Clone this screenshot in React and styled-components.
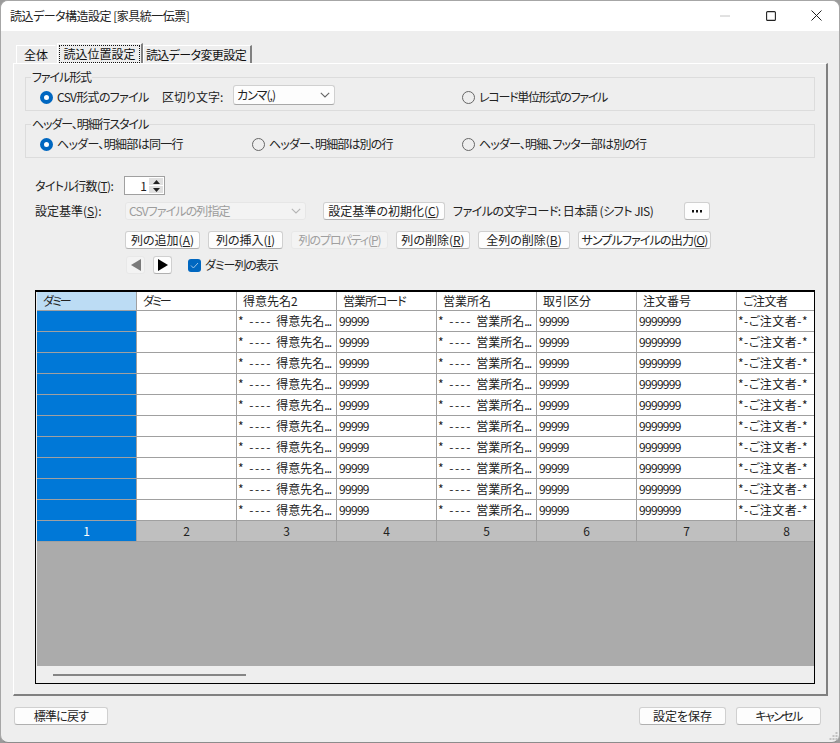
import React from 'react'
import styled, { createGlobalStyle } from 'styled-components'

const GlobalStyle = createGlobalStyle`
  html, body {
    margin: 0;
    padding: 0;
    background: #9a9a9a;
  }
  * {
    box-sizing: border-box;
  }
`

const Window = styled.div`
  position: relative;
  display: flex;
  flex-direction: column;
  width: 840px;
  height: 743px;
  overflow: hidden;
  background: #eeeeee;
  border: 1px solid #a6a6a6;
  border-bottom-color: #8c8c8c;
  border-radius: 8px;
  color: #111;
  font-family: "Noto Sans CJK JP", "Liberation Sans", sans-serif;
  font-size: 12px;
  line-height: 14px;
  font-feature-settings: "palt";
`

const TitleBar = styled.div`
  display: flex;
  align-items: center;
  flex: none;
  height: 30px;
  padding-left: 9px;
  background: #fff;
`

const TitleText = styled.div`
  flex: 1;
  color: #222;
  letter-spacing: -0.5px;
`

const WinButton = styled.div`
  display: flex;
  align-items: center;
  justify-content: center;
  width: 45.5px;
  height: 30px;
  margin-top: -1px;
`

const Content = styled.div`
  display: flex;
  flex-direction: column;
  flex: 1;
  padding: 12px 11px 0 12px;
`

const TabRow = styled.div`
  display: flex;
  align-items: flex-end;
  height: 20px;
  padding-left: 3px;
`

const Tab = styled.div`
  display: flex;
  align-items: center;
  justify-content: center;
  height: ${p => (p.$active ? 20 : 18)}px;
  width: ${p => p.$w}px;
  margin-right: ${p => p.$gap || 0}px;
  padding-right: ${p => p.$pr || 0}px;
  letter-spacing: ${p => p.$ls || 0}px;
  border-top: 1px solid #fff;
  border-left: 1px solid #fff;
  border-right: ${p => (p.$edge ? '2px solid #808080' : '1px solid transparent')};
`

const FocusText = styled.span`
  padding: 1px 3px;
  outline: 1px dotted #111;
`

const Panel = styled.div`
  display: flex;
  flex-direction: column;
  width: 815px;
  height: 633px;
  padding: 6px 11px 0 11px;
  border-top: 1px solid #fff;
  border-left: 1px solid #fff;
  border-right: 2px solid #808080;
  border-bottom: 2px solid #808080;
`

const Group = styled.fieldset`
  margin: 0 0 6px 0;
  padding: 0 0 0 14px;
  min-width: 0;
  width: 790px;
  border: 1px solid #dcdcdc;
`

const Legend = styled.legend`
  margin-left: -9px;
  padding: 0 1px;
  color: #222;
  height: 14px;
  letter-spacing: -1.1px;
`

const GroupRow = styled.div`
  display: grid;
  grid-template-columns: 212px 210px 1fr;
  align-items: center;
  height: 26px;
`

const Span2 = styled.div`
  display: flex;
  align-items: center;
  grid-column: span 2;
`

const RadioWrap = styled.label`
  display: flex;
  align-items: center;
  flex: none;
  gap: 4px;
  width: ${p => (p.$w ? `${p.$w}px` : 'auto')};
  color: #222;
  letter-spacing: ${p => p.$ls ?? -0.7}px;
`

const RadioDot = styled.span`
  flex: none;
  width: 13px;
  height: 13px;
  border-radius: 50%;
  background: ${p => (p.$on ? '#fff' : 'transparent')};
  border: ${p => (p.$on ? '4px solid #0067c0' : '1px solid #666')};
`

const Caption = styled.span`
  flex: none;
  margin-left: ${p => p.$ml || 0}px;
  width: ${p => (p.$w ? `${p.$w}px` : 'auto')};
  color: #222;
  letter-spacing: ${p => p.$ls || 0}px;
`

const Combo = styled.div`
  display: flex;
  align-items: center;
  justify-content: space-between;
  flex: none;
  width: ${p => p.$w}px;
  height: ${p => p.$h || 20}px;
  margin-bottom: ${p => p.$mb || 0}px;
  padding: 0 4px 0 3px;
  background: ${p => (p.$disabled ? '#f3f3f3' : '#fdfdfd')};
  color: ${p => (p.$disabled ? '#9c9c9c' : '#222')};
  border: 1px solid ${p => (p.$disabled ? '#e6e6e6' : '#d0d0d0')};
  border-bottom-color: ${p => (p.$disabled ? '#e6e6e6' : '#a8a8a8')};
  border-radius: 3px;
  letter-spacing: ${p => p.$ls || 0}px;
`

const FormRow = styled.div`
  display: flex;
  align-items: center;
  height: ${p => p.$h || 18}px;
  margin-top: ${p => p.$mt || 0}px;
  padding-left: ${p => p.$pl || 0}px;
  gap: ${p => p.$gap || 0}px;
`

const Spinner = styled.div`
  display: flex;
  align-items: center;
  justify-content: flex-end;
  width: 41px;
  height: 19px;
  margin-left: -1px;
  padding-right: 1px;
  background: #fff;
  border: 1px solid #a0a0a0;
`

const SpinValue = styled.span`
  margin-right: 2px;
  color: #222;
`

const SpinArrows = styled.div`
  display: flex;
  flex-direction: column;
  gap: 1px;
  width: 14px;
`

const SpinArrow = styled.div`
  display: flex;
  align-items: center;
  justify-content: center;
  height: 7px;
  background: #e0e0e0;
`

const Button = styled.div`
  display: flex;
  align-items: center;
  justify-content: center;
  flex: none;
  width: ${p => p.$w}px;
  height: 18px;
  margin-left: ${p => p.$ml || 0}px;
  background: ${p => (p.$disabled ? '#f3f3f3' : '#fdfdfd')};
  color: ${p => (p.$disabled ? '#a0a0a0' : '#222')};
  border: 1px solid ${p => (p.$disabled ? '#e8e8e8' : '#d0d0d0')};
  border-bottom-color: ${p => (p.$disabled ? '#e8e8e8' : '#b0b0b0')};
  border-radius: 3px;
  white-space: nowrap;
  letter-spacing: ${p => p.$ls || 0}px;
`

const Check = styled.span`
  display: flex;
  align-items: center;
  justify-content: center;
  flex: none;
  width: 13px;
  height: 13px;
  margin: 0 4px 0 16px;
  background: #0067c0;
  border-radius: 3px;
`

const Under = styled.span`
  text-decoration: underline;
`

const Sheet = styled.div`
  display: flex;
  flex-direction: column;
  width: 780px;
  height: 394px;
  margin: 16px 0 0 10px;
  background: #eeeeee;
  border: 1px solid #000;
  border-top-width: 2px;
  padding-left: 1px;
`

const SheetRows = styled.div`
  flex: none;
  overflow: hidden;
`

const SheetRow = styled.div`
  display: grid;
  grid-template-columns: repeat(8, 100px);
  height: ${p => p.$h}px;
  border-bottom: 1px solid #a0a0a0;
  background: ${p => p.$bg || '#fff'};
`

const Cell = styled.div`
  padding-left: ${p => p.$pl ?? 1}px;
  border-right: 1px solid #a0a0a0;
  overflow: hidden;
  white-space: pre;
  line-height: ${p => p.$lh}px;
  color: ${p => p.$color || '#222'};
  background: ${p => p.$bg || 'transparent'};
  text-align: ${p => p.$align || 'left'};
  letter-spacing: ${p => p.$ls || 0}px;
`

const Dashes = styled.span`
  letter-spacing: 1.5px;
`

const Dots = styled.span`
  letter-spacing: -1px;
`

const Backdrop = styled.div`
  flex: 1;
  background: #ababab;
`

const ScrollStrip = styled.div`
  flex: none;
  height: 17px;
  padding: 8px 0 0 16px;
  background: #eeeeee;
`

const ScrollThumb = styled.div`
  width: 193px;
  height: 2px;
  background: #858585;
`

const Footer = styled.div`
  display: flex;
  align-items: center;
  height: 18px;
  margin-top: 11px;
`

const Grip = styled.svg`
  position: absolute;
  right: 1px;
  bottom: 1px;
`

const columns = [
  { name: 'ダミー', ls: -2 },
  { name: 'ダミー', ls: -2 },
  { name: '得意先名2' },
  { name: '営業所コード', ls: -1 },
  { name: '営業所名' },
  { name: '取引区分' },
  { name: '注文番号' },
  { name: 'ご注文者', ls: -0.5 },
]
const rows = Array.from({ length: 10 }, (_, i) => i)

function Radio({ on, w, ls, children }) {
  return (
    <RadioWrap $w={w} $ls={ls}>
      <RadioDot $on={on} />
      {children}
    </RadioWrap>
  )
}

function Chevron({ color }) {
  return (
    <svg width="10" height="6" viewBox="0 0 10 6">
      <path d="M.8.8 5 5 9.2.8" fill="none" stroke={color} strokeWidth="1.1" />
    </svg>
  )
}

function Triangle({ dir, color }) {
  return (
    <svg width="10" height="12" viewBox="0 0 10 12">
      <polygon points={dir === 'left' ? '10,0 10,12 0,6' : '0,0 0,12 10,6'} fill={color} />
    </svg>
  )
}

function NameCell({ children }) {
  return (
    <Cell $lh={20}>
      <Dashes>* ---- </Dashes>{children}<Dots>...</Dots>
    </Cell>
  )
}

function App() {
  return (
    <Window>
      <GlobalStyle />
      <TitleBar>
        <TitleText>読込データ構造設定 [家具統一伝票]</TitleText>
        <WinButton>
          <svg width="10" height="2" viewBox="0 0 10 2"><path d="M0 1h10" stroke="#c4c4c4" /></svg>
        </WinButton>
        <WinButton>
          <svg width="10" height="10" viewBox="0 0 10 10"><rect x=".6" y=".6" width="8.8" height="8.8" rx="1" fill="none" stroke="#222" strokeWidth="1.1" /></svg>
        </WinButton>
        <WinButton>
          <svg width="11" height="11" viewBox="0 0 11 11"><path d="M.5.5l10 10M10.5.5l-10 10" stroke="#222" strokeWidth="1" /></svg>
        </WinButton>
      </TitleBar>

      <Content>
        <TabRow>
          <Tab $w={40} $gap={1}>全体</Tab>
          <Tab $w={86} $edge $active><FocusText>読込位置設定</FocusText></Tab>
          <Tab $w={109} $edge $ls={-0.6} $pr={2}>読込データ変更設定</Tab>
        </TabRow>

        <Panel>
          <Group>
            <Legend>ファイル形式</Legend>
            <GroupRow>
              <Span2>
                <Radio on w={122}>CSV形式のファイル</Radio>
                <Caption $w={71}>区切り文字:</Caption>
                <Combo $w={102} $mb={4} $ls={-1}>カンマ(,)<Chevron color="#666" /></Combo>
              </Span2>
              <Radio ls={-1.25}>レコード単位形式のファイル</Radio>
            </GroupRow>
          </Group>

          <Group>
            <Legend>ヘッダー、明細行スタイル</Legend>
            <GroupRow>
              <Radio on>ヘッダー、明細部は同一行</Radio>
              <Radio ls={-0.85}>ヘッダー、明細部は別の行</Radio>
              <Radio ls={-0.85}>ヘッダー、明細、フッター部は別の行</Radio>
            </GroupRow>
          </Group>

          <FormRow $mt={12} $h={19} $pl={10}>
            <Caption $w={90} $ls={-0.6}>タイトル行数(<Under>T</Under>):</Caption>
            <Spinner>
              <SpinValue>1</SpinValue>
              <SpinArrows>
                <SpinArrow>
                  <svg width="7" height="4" viewBox="0 0 7 4"><polygon points="3.5,0 7,4 0,4" fill="#222" /></svg>
                </SpinArrow>
                <SpinArrow>
                  <svg width="7" height="4" viewBox="0 0 7 4"><polygon points="0,0 7,0 3.5,4" fill="#222" /></svg>
                </SpinArrow>
              </SpinArrows>
            </Spinner>
          </FormRow>

          <FormRow $mt={7} $h={18} $pl={10}>
            <Caption $w={90}>設定基準(<Under>S</Under>):</Caption>
            <Combo $w={181} $h={18} $disabled $ls={-0.9}>CSVファイルの列指定<Chevron color="#b5b5b5" /></Combo>
            <Button $w={122} $ml={17}>設定基準の初期化(<Under>C</Under>)</Button>
            <Caption $ml={8} $w={231} $ls={-0.5}>ファイルの文字コード: 日本語 (シフト JIS)</Caption>
            <Button $w={26}>
              <svg width="12" height="3" viewBox="0 0 12 3"><path d="M1 0h2v2.4H1zM5 0h2v2.4H5zM9 0h2v2.4H9z" fill="#111" /></svg>
            </Button>
          </FormRow>

          <FormRow $mt={11} $h={18} $pl={100} $gap={8}>
            <Button $w={75}>列の追加(<Under>A</Under>)</Button>
            <Button $w={75}>列の挿入(<Under>I</Under>)</Button>
            <Button $w={97} $disabled $ls={-1.1}>列のプロパティ(<Under>P</Under>)</Button>
            <Button $w={74}>列の削除(<Under>R</Under>)</Button>
            <Button $w={92}>全列の削除(<Under>B</Under>)</Button>
            <Button $w={133} $ls={-0.85}>サンプルファイルの出力(<Under>O</Under>)</Button>
          </FormRow>

          <FormRow $mt={7} $h={18} $pl={101}>
            <Button $w={19} $disabled><Triangle dir="left" color="#7a7a7a" /></Button>
            <Button $w={19} $ml={8}><Triangle dir="right" color="#000" /></Button>
            <Check>
              <svg width="9" height="7" viewBox="0 0 9 7"><path d="M1 3.5 3.4 6 8 1" fill="none" stroke="#9cc4e8" strokeWidth="1" /></svg>
            </Check>
            <Caption $ls={-1.1}>ダミー列の表示</Caption>
          </FormRow>

          <Sheet>
            <SheetRows>
              <SheetRow $h={19}>
                {columns.map((col, i) => (
                  <Cell key={i} $lh={18} $pl={6} $ls={col.ls} $bg={i === 0 ? '#bcdcf4' : undefined}>{col.name}</Cell>
                ))}
              </SheetRow>
              {rows.map(r => (
                <SheetRow key={r} $h={21}>
                  <Cell $lh={20} $bg="#0078d7" />
                  <Cell $lh={20} />
                  <NameCell>得意先名</NameCell>
                  <Cell $lh={20} $pl={2} $ls={-0.7}>99999</Cell>
                  <NameCell>営業所名</NameCell>
                  <Cell $lh={20} $pl={2} $ls={-0.7}>99999</Cell>
                  <Cell $lh={20} $pl={2} $ls={-0.7}>9999999</Cell>
                  <Cell $lh={20} $ls={0.5}>*-ご注文者-*</Cell>
                </SheetRow>
              ))}
              <SheetRow $h={21} $bg="#bfbfbf">
                {columns.map((_, i) => (
                  <Cell
                    key={i}
                    $lh={20}
                    $pl={0}
                    $align="center"
                    $bg={i === 0 ? '#0078d7' : undefined}
                    $color={i === 0 ? '#fff' : '#222'}
                  >
                    {i + 1}
                  </Cell>
                ))}
              </SheetRow>
            </SheetRows>
            <Backdrop />
            <ScrollStrip><ScrollThumb /></ScrollStrip>
          </Sheet>
        </Panel>

        <Footer>
          <Button $w={94} $ml={1} $ls={-0.8}>標準に戻す</Button>
          <Button $w={87} $ml={531}>設定を保存</Button>
          <Button $w={85} $ml={10} $ls={-1.6}>キャンセル</Button>
        </Footer>
      </Content>

      <Grip width="9" height="9" viewBox="0 0 9 9">
        <path d="M6.5 0h2v2h-2zM3.5 3h2v2h-2zM6.5 3h2v2h-2zM.5 6h2v2h-2zM3.5 6h2v2h-2zM6.5 6h2v2h-2z" fill="#c2c2c2" />
      </Grip>
    </Window>
  )
}

export default App
